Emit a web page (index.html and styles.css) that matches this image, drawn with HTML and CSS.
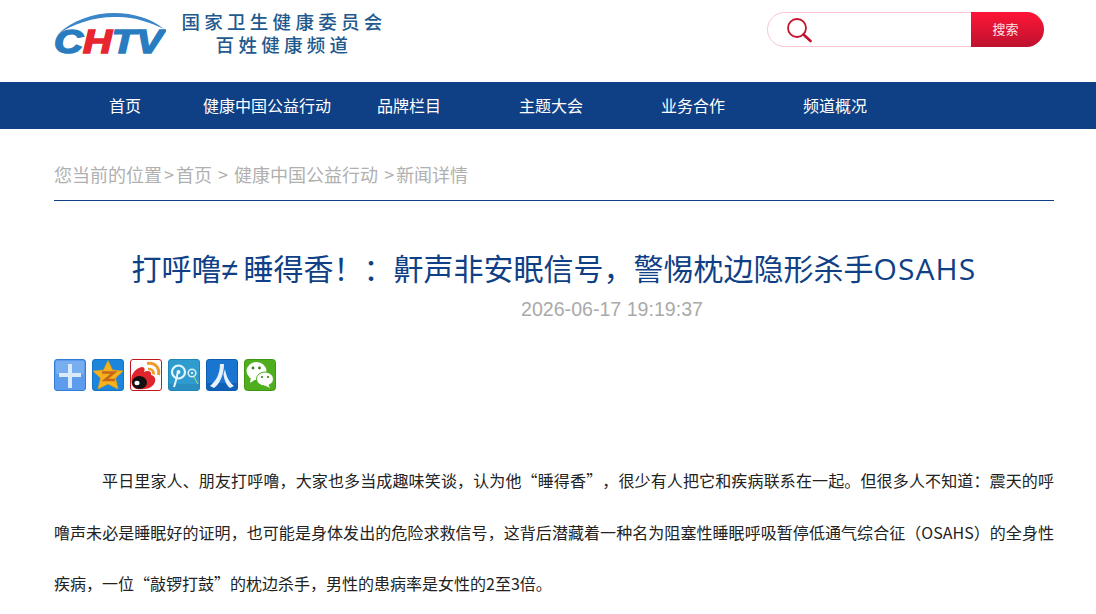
FILE: index.html
```html
<!DOCTYPE html>
<html lang="zh-CN">
<head>
    <meta charset="UTF-8">
    <title>打呼噜≠睡得香！：鼾声非安眠信号，警惕枕边隐形杀手OSAHS</title>
    <link rel="stylesheet" href="styles.css">
</head>
<body>

    <div class="header">
        <div class="wrap header-inner">
            <a class="logo" href="#">
                <svg class="logo-mark" width="112" height="52" viewBox="0 0 112 52">
                    <path d="M3 25 C18 10 40 3 60 3 C80 3 98 9 110 19 C96 12 78 6 60 7 C40 7 18 14 3 25 Z" fill="#3a86c8"/>
                    <text class="logo-letters" x="0" y="43" textLength="109" lengthAdjust="spacingAndGlyphs"><tspan fill="#2a7cc0" stroke="#2a7cc0">C</tspan><tspan fill="#e8262f" stroke="#e8262f">H</tspan><tspan fill="#2a7cc0" stroke="#2a7cc0">TV</tspan></text>
                </svg>
                <div class="logo-text">
                    <div>国家卫生健康委员会</div>
                    <div>百姓健康频道</div>
                </div>
            </a>
            <form class="search">
                <svg class="search-icon" width="26" height="26" viewBox="0 0 26 26">
                    <circle cx="11" cy="11" r="9" fill="none" stroke="#c4142c" stroke-width="1.8"/>
                    <path d="M17.5 17.5 L24.5 24" stroke="#c4142c" stroke-width="2.6" stroke-linecap="round"/>
                </svg>
                <button class="search-btn" type="button">搜索</button>
            </form>
        </div>
    </div>

    <div class="nav">
        <div class="wrap nav-inner">
            <a href="#">首页</a>
            <a href="#">健康中国公益行动</a>
            <a href="#">品牌栏目</a>
            <a href="#">主题大会</a>
            <a href="#">业务合作</a>
            <a href="#">频道概况</a>
        </div>
    </div>

    <div class="wrap">
        <div class="crumb">您当前的位置<span class="gt">&gt;</span>首页 <span class="gt">&gt;</span> 健康中国公益行动 <span class="gt">&gt;</span>新闻详情</div>

        <h1 class="title">打呼噜<span class="title-ne">≠</span>睡得香！：鼾声非安眠信号，警惕枕边隐形杀手<span class="title-latin">OSAHS</span></h1>
        <div class="date">2026-06-17 19:19:37</div>

        <div class="share">
            <a href="#" title="更多">
                <svg width="32" height="32" viewBox="0 0 32 32">
                    <rect x=".5" y=".5" width="31" height="31" rx="2.5" fill="#5d9cec" stroke="#2f7fd6"/>
                    <rect x="2" y="2" width="28" height="13" fill="#76aef0"/>
                    <path d="M16 5 V29 M5 16 H27" stroke="#dbe9fb" stroke-width="4"/>
                </svg>
            </a>
            <a href="#" title="QQ空间">
                <svg width="32" height="32" viewBox="0 0 32 32">
                    <rect x=".5" y=".5" width="31" height="31" rx="2.5" fill="#1c86dc" stroke="#1473c4"/>
                    <path d="M16 1.5 L20.5 11 L31 12 L23.5 19 L26 30 L16 25 L6 30 L8.5 19 L1 12 L11.5 11 Z" fill="#f6b21c" stroke="#e89a10" stroke-width=".6"/>
                    <path d="M10 13.5 H22 L13 21 H23" fill="none" stroke="#c8661a" stroke-width="2.6"/>
                </svg>
            </a>
            <a href="#" title="新浪微博">
                <svg width="32" height="32" viewBox="0 0 32 32">
                    <rect x=".5" y=".5" width="31" height="31" rx="2.5" fill="#fff" stroke="#c4171d"/>
                    <path d="M1.5 19 C2 13 7 9 12 8 C15 8 15 11 14 13 C18 11 22 12 21 16 C26 17 26 22 24 25 C21 30 12 31 6 30 C2 28 1 24 1.5 19 Z" fill="#e0242b"/>
                    <ellipse cx="9.5" cy="23.5" rx="7.5" ry="6.5" fill="#111"/>
                    <ellipse cx="7" cy="24" rx="2.6" ry="2.2" fill="#fff"/>
                    <path d="M17 4.5 C25 3 30 9 28.5 16" fill="none" stroke="#f39a2c" stroke-width="3"/>
                    <path d="M18 10 C21.5 9.5 24 12 23.5 15.5" fill="none" stroke="#f39a2c" stroke-width="2.6"/>
                </svg>
            </a>
            <a href="#" title="腾讯微博">
                <svg width="32" height="32" viewBox="0 0 32 32">
                    <rect x=".5" y=".5" width="31" height="31" rx="2.5" fill="#2e9ccf" stroke="#1f86b8"/>
                    <rect x="1" y="25" width="30" height="6" fill="#2a8fc0"/>
                    <circle cx="10.5" cy="13" r="6.5" fill="none" stroke="#e6f5fb" stroke-width="2.2"/>
                    <circle cx="10.5" cy="13" r="2" fill="#e6f5fb"/>
                    <path d="M9.5 14 C9 19 7.5 23 6 28" fill="none" stroke="#e6f5fb" stroke-width="2"/>
                    <circle cx="24" cy="14" r="3.8" fill="none" stroke="#d7eef7" stroke-width="1.6"/>
                    <circle cx="24" cy="14" r="1.2" fill="#d7eef7"/>
                    <path d="M26 18 L30 25" stroke="#b8d96a" stroke-width="1"/>
                </svg>
            </a>
            <a href="#" title="人人网">
                <svg width="32" height="32" viewBox="0 0 32 32">
                    <rect x=".5" y=".5" width="31" height="31" rx="2.5" fill="#1a75d0" stroke="#0f5cae"/>
                    <rect x="1" y="24" width="30" height="7" fill="#1160b8"/>
                    <path d="M14 5 H18 C18 15 14 25 8 29 L4 27 C10 22 14 15 14 5 Z" fill="#e6f1fb"/>
                    <path d="M19 10 C20 17 23 23 28 27 L24 29 C20 26 18 20 17.5 15 Z" fill="#e6f1fb"/>
                </svg>
            </a>
            <a href="#" title="微信">
                <svg width="32" height="32" viewBox="0 0 32 32">
                    <rect x=".5" y=".5" width="31" height="31" rx="3" fill="#4fae1e" stroke="#3f9616"/>
                    <ellipse cx="12.5" cy="12" rx="10" ry="9" fill="#fff"/>
                    <path d="M7 18 L6 24 L12 20 Z" fill="#fff"/>
                    <ellipse cx="21" cy="20" rx="8.5" ry="7" fill="#fff" stroke="#4fae1e"/>
                    <path d="M24 25 L26 29 L20 26 Z" fill="#fff"/>
                    <circle cx="9" cy="9" r="1.4" fill="#3a7d1c"/>
                    <circle cx="15.5" cy="9" r="1.4" fill="#3a7d1c"/>
                    <circle cx="18" cy="18" r="1.1" fill="#3a7d1c"/>
                    <circle cx="24" cy="18" r="1.1" fill="#3a7d1c"/>
                </svg>
            </a>
        </div>

        <p class="article">平日里家人、朋友打呼噜，大家也多当成趣味笑谈，认为他“睡得香”，很少有人把它和疾病联系在一起。但很多人不知道：震天的呼噜声未必是睡眠好的证明，也可能是身体发出的危险求救信号，这背后潜藏着一种名为阻塞性睡眠呼吸暂停低通气综合征（OSAHS）的全身性疾病，一位“敲锣打鼓”的枕边杀手，男性的患病率是女性的2至3倍。</p>
    </div>

</body>
</html>
```

FILE: styles.css
```css
body {
    margin: 0;
    background-color: #fff;
    font-family: "Noto Sans CJK SC", "Liberation Sans", sans-serif;
    text-spacing-trim: space-all;
    color: #222;
}
a {
    color: inherit;
    text-decoration: none;
}
.wrap {
    width: 1000px;
    margin-left: 54px;
}
.header {
    height: 82px;
}
.header-inner {
    display: flex;
    justify-content: space-between;
    padding-top: 10px;
    padding-right: 10px;
    box-sizing: border-box;
}
.logo {
    display: flex;
    align-items: flex-start;
    gap: 15px;
}
.logo-letters {
    font-family: "Liberation Sans", sans-serif;
    font-size: 33px;
    font-weight: bold;
    font-style: italic;
    stroke-width: 1.6;
}
.logo-text {
    width: 206px;
    margin-top: 1px;
    text-align: center;
    font-family: "Liberation Sans", "Noto Sans CJK SC", sans-serif;
    font-size: 18.5px;
    font-weight: 500;
    line-height: 23px;
    letter-spacing: 4.3px;
    color: #1f5a8e;
}
.search {
    display: flex;
    justify-content: flex-end;
    width: 277px;
    height: 35px;
    margin-top: 2px;
    box-sizing: border-box;
    border: 1px solid #fbc6d0;
    border-radius: 18px;
    position: relative;
}
.search-icon {
    position: absolute;
    left: 18px;
    top: 4px;
}
.search-btn {
    width: 73px;
    margin: -1px;
    padding: 0 4px 2px 0;
    border: 0;
    border-radius: 0 18px 18px 0;
    background: linear-gradient(#ff1535, #bd1230);
    color: #fbe3e6;
    font-family: inherit;
    font-size: 13px;
}
.nav {
    height: 47px;
    background-color: #0f4085;
}
.nav-inner {
    display: flex;
}
.nav-inner a {
    width: 142px;
    text-align: center;
    line-height: 47px;
    font-size: 16px;
    color: #fff;
}
.crumb {
    margin-top: 33px;
    height: 38px;
    line-height: 25px;
    font-size: 18px;
    color: #b0b0b0;
    border-bottom: 1px solid #0f4085;
}
.gt {
    display: inline-block;
    width: 14px;
    text-align: center;
}
.title {
    height: 42px;
    margin: 45px 0 0;
    text-align: center;
    font-size: 30px;
    font-weight: normal;
    line-height: 42px;
    color: #0f4085;
}
.title-ne {
    font-family: "Liberation Sans", sans-serif;
    letter-spacing: 5.5px;
}
.title-latin {
    font-family: "Open Sans", sans-serif;
    letter-spacing: 1.1px;
}
.date {
    margin-top: 9px;
    padding-left: 116px;
    text-align: center;
    font-family: "Liberation Sans", sans-serif;
    font-size: 19.6px;
    line-height: 24px;
    color: #aaa;
}
.share {
    display: flex;
    gap: 6px;
    margin-top: 38px;
}
.share a {
    display: block;
    height: 32px;
}
.article {
    margin: 64px 0 0;
    font-size: 16px;
    line-height: 51.5px;
    text-indent: 48px;
    text-align: justify;
    color: #222;
}
```
